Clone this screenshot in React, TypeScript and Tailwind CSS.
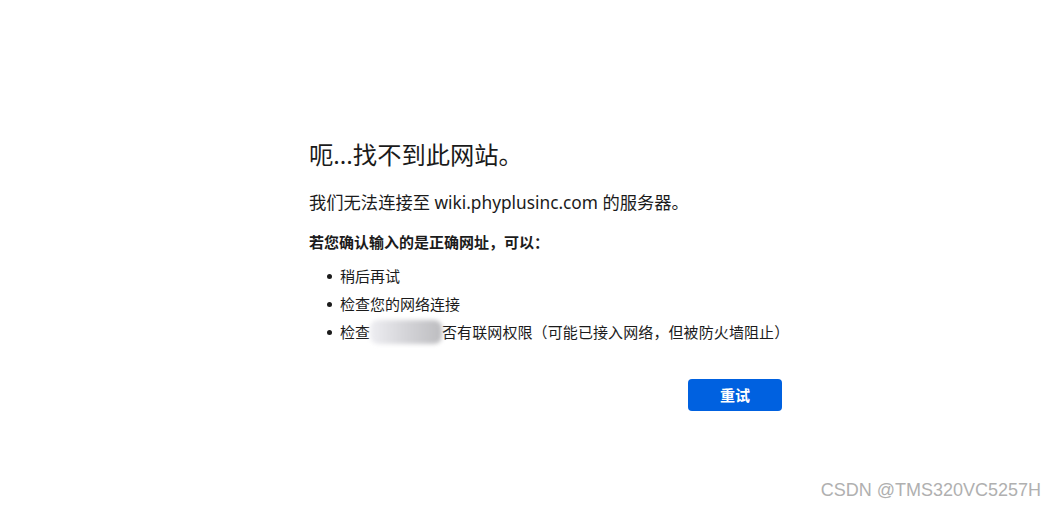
export default function App() {
  const items = ["稍后再试", "检查您的网络连接"];
  return (
    <div lang="zh-CN" className="relative w-full h-[511px] bg-white overflow-hidden font-['Segoe_UI','Noto_Sans','Noto_Sans_CJK_SC',sans-serif] text-[#1b1b1b]">
      <div className="pt-[138px] pl-[309px]">
        <div className="w-[473px] flex flex-col">
          <h1 className="text-[24.3px] leading-[32px] font-normal font-['Noto_Sans_CJK_SC',sans-serif]">
            呃<span className="font-['Noto_Sans',sans-serif]">...</span>找不到此网站。
          </h1>
          <p className="mt-[20px] text-[17.3px] leading-[24px]">
            我们无法连接至 wiki.phyplusinc.com 的服务器。
          </p>
          <p className="mt-[17px] text-[15px] leading-[20px] font-bold font-['Noto_Sans_CJK_SC',sans-serif]">
            若您确认输入的是正确网址，可以：
          </p>
          <ul className="mt-[10px] text-[15px] font-['Noto_Sans_CJK_SC',sans-serif]">
            {items.map((t) => (
              <li key={t} className="flex items-center h-[28px]">
                <span className="shrink-0 w-[5px] h-[5px] rounded-full bg-[#1b1b1b] ml-[18px] mr-[8px]" />
                {t}
              </li>
            ))}
            <li className="flex items-center h-[28px] whitespace-nowrap">
              <span className="shrink-0 w-[5px] h-[5px] rounded-full bg-[#1b1b1b] ml-[18px] mr-[8px]" />
              <span className="shrink-0">检查</span>
              <span className="shrink-0 w-[72px] h-[24px] rounded-[8px] bg-gradient-to-r from-[#eeeef2] via-[#d4d4d8] to-[#bdbdc0] blur-[2px]" />
              <span className="shrink-0 tracking-[0.1px]">否有联网权限（可能已接入网络，但被防火墙阻止）</span>
            </li>
          </ul>
          <div className="mt-[33px] flex justify-end">
            <button className="w-[94px] h-[32px] rounded-[4px] bg-[#0061e0] text-white text-[15px] font-bold font-['Noto_Sans_CJK_SC',sans-serif]">
              重试
            </button>
          </div>
        </div>
      </div>
      <div className="absolute right-[14px] bottom-[7px] text-[18px] text-[#b0b0b0] font-['Liberation_Sans',sans-serif] [text-shadow:0_0_1px_#fff]">
        CSDN @TMS320VC5257H
      </div>
    </div>
  );
}
